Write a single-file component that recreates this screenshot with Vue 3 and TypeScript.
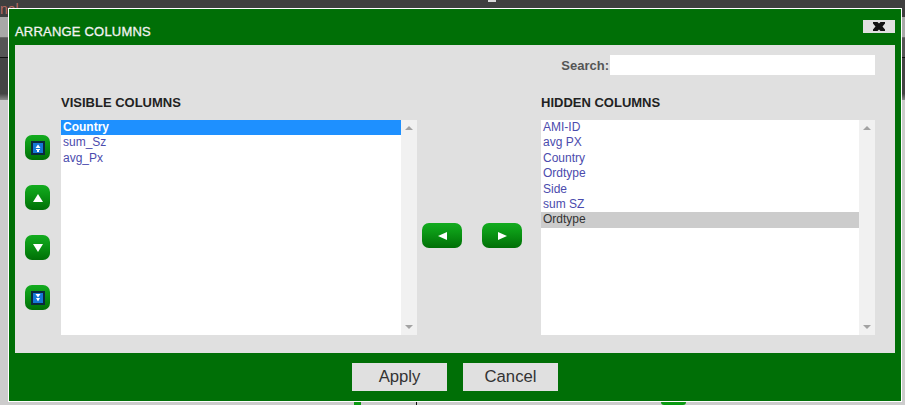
<script setup lang="ts">
const visibleCols: string[] = ['Country', 'sum_Sz', 'avg_Px']
const hiddenCols: string[] = ['AMI-ID', 'avg PX', 'Country', 'Ordtype', 'Side', 'sum SZ', 'Ordtype']
</script>

<template>
  <div class="page">
    <div class="bands">
      <div class="band top"><span class="clip">nal</span><i class="speck"></i></div>
      <div class="band light"></div>
      <div class="band mid"></div>
      <div class="band fade"></div>
      <div class="band rest"></div>
      <div class="bottom">
        <i class="tick"></i>
        <i class="gbit a"></i>
        <i class="gbit b"></i>
      </div>
    </div>

    <div class="dialog">
      <div class="titlebar">
        <span class="title">ARRANGE COLUMNS</span>
        <button class="close" type="button" aria-label="Close">
          <svg width="14" height="9" viewBox="0 0 14 9"><path d="M1 0H5.500L7 1.500 8.500 0H13V1.500L10.500 4.500 13 7.500V9H8.500L7 7.500 5.500 9H1V7.500L3.500 4.500 1 1.500Z" fill="#111" /></svg>
        </button>
      </div>

      <div class="panel">
        <div class="search">
          <label class="search-label" for="colsearch">Search:</label>
          <input id="colsearch" class="search-input" type="text" />
        </div>

        <div class="columns">
          <div class="movers">
            <button class="gbtn square" type="button" aria-label="Move to top">
              <svg width="14" height="14" viewBox="0 0 14 14"><rect x="1" y="1" width="12" height="12" fill="#1478d6" stroke="#0b2a3c" stroke-width="2" /><path d="M7 3.500 9.500 7H4.500Z M5 8H9V9H5Z M6 9H8V11H6Z" fill="#fff" /></svg>
            </button>
            <button class="gbtn square" type="button" aria-label="Move up">
              <svg width="10" height="8" viewBox="0 0 10 8"><path d="M5 0 10 8H0Z" fill="#fff" /></svg>
            </button>
            <button class="gbtn square" type="button" aria-label="Move down">
              <svg width="10" height="8" viewBox="0 0 10 8"><path d="M0 0H10L5 8Z" fill="#fff" /></svg>
            </button>
            <button class="gbtn square" type="button" aria-label="Move to bottom">
              <svg width="14" height="14" viewBox="0 0 14 14"><rect x="1" y="1" width="12" height="12" fill="#1478d6" stroke="#0b2a3c" stroke-width="2" /><path d="M4.500 3H9.500L7 6.500Z M5 7H9L7 10.500Z" fill="#fff" /></svg>
            </button>
          </div>

          <div class="col left">
            <h3 class="heading">VISIBLE COLUMNS</h3>
            <div class="listbox">
              <ul class="items">
                <li v-for="(c, i) in visibleCols" :key="i" :class="{ selected: i === 0 }">{{ c }}</li>
              </ul>
              <div class="scroll"><i class="up"></i><i class="down"></i></div>
            </div>
          </div>

          <div class="transfer">
            <button class="gbtn wide" type="button" aria-label="Hide column">
              <svg width="9" height="8" viewBox="0 0 9 8"><path d="M0 4 9 0V8Z" fill="#fff" /></svg>
            </button>
            <button class="gbtn wide" type="button" aria-label="Show column">
              <svg width="9" height="8" viewBox="0 0 9 8"><path d="M0 0 9 4 0 8Z" fill="#fff" /></svg>
            </button>
          </div>

          <div class="col right">
            <h3 class="heading">HIDDEN COLUMNS</h3>
            <div class="listbox">
              <ul class="items">
                <li v-for="(c, i) in hiddenCols" :key="i" :class="{ grayed: i === 6 }">{{ c }}</li>
              </ul>
              <div class="scroll"><i class="up"></i><i class="down"></i></div>
            </div>
          </div>
        </div>
      </div>

      <div class="footer">
        <button class="action" type="button">Apply</button>
        <button class="action" type="button">Cancel</button>
      </div>
    </div>
  </div>
</template>

<style>
html, body { margin: 0; overflow: hidden; }
</style>

<style scoped>
.page {
  position: relative;
  width: 905px;
  height: 405px;
  overflow: hidden;
  font-family: "Liberation Sans", Arial, sans-serif;
  background: #cccccc;
}
.bands { display: flex; flex-direction: column; height: 405px; }
.band { flex: none; position: relative; overflow: hidden; }
.top { height: 17px; background: #3f3f3f; border: 0; }
.clip {
  position: absolute; left: 0; top: 1px;
  font: 14px "Liberation Sans", sans-serif; color: #b86a62;
}
.speck { position: absolute; left: 488px; top: 0; width: 8px; height: 2px; background: #d8d8d8; }
.light { height: 20px; background: #a8a8a8; border-bottom: 1px solid #6a6a6a; }
.mid { height: 19px; background: #555555; border-bottom: 1px solid #111111; }
.fade { height: 42px; background: linear-gradient(#444444 0, #444444 85%, #8a8a8a 100%); }
.rest { flex: 1; background: #cccccc; }
.bottom { flex: none; height: 3px; position: relative; background: #cccccc; }
.tick { position: absolute; left: 416px; top: 0; width: 1px; height: 3px; background: #111; }
.gbit { position: absolute; top: 0; height: 3px; background: #0a9a12; }
.gbit.a { left: 354px; width: 7px; }
.gbit.b { left: 661px; width: 25px; border-radius: 0 0 10px 10px; }

.dialog {
  position: absolute;
  left: 8px;
  top: 8px;
  width: 892px;
  height: 392px;
  border: 1px solid #ffffff;
  background: #006f06;
  display: flex;
  flex-direction: column;
}
.titlebar {
  flex: none;
  height: 36px;
  padding: 0 6px;
  display: flex;
  align-items: flex-start;
  justify-content: space-between;
}
.title {
  margin-top: 14px;
  font-size: 13px;
  line-height: 17px;
  font-weight: 400;
  letter-spacing: 0.2px;
  color: #f2f2f2;
  -webkit-text-stroke: 0.3px #f2f2f2;
}
.close {
  margin: 11px 0 0;
  width: 32px;
  height: 13px;
  padding: 0;
  border: 0;
  background: #e0e0e0;
  display: flex;
  align-items: center;
  justify-content: center;
}
.panel {
  flex: none;
  height: 308px;
  margin: 0 6px;
  background: #e0e0e0;
  box-sizing: border-box;
  padding-top: 10px;
}
.search {
  height: 20px;
  display: flex;
  justify-content: flex-end;
  align-items: center;
  padding-right: 20px;
}
.search-label {
  font-size: 13px;
  font-weight: 700;
  color: #555555;
  margin-right: 1px;
}
.search-input {
  width: 265px;
  height: 20px;
  box-sizing: border-box;
  border: 0;
  padding: 0;
  background: #ffffff;
}
.columns {
  display: flex;
  margin-top: 20px;
  padding-left: 10px;
}
.movers {
  width: 25px;
  margin-right: 11px;
  padding-top: 40px;
  display: flex;
  flex-direction: column;
  gap: 25px;
}
.gbtn {
  flex: none;
  padding: 0;
  border: 0;
  border-radius: 7px;
  height: 25px;
  background: linear-gradient(#13ab1f 0%, #0c9a16 35%, #006f06 100%);
  display: flex;
  align-items: center;
  justify-content: center;
}
.square { width: 25px; }
.wide { width: 40px; }
.col { flex: none; }
.left { width: 356px; }
.right { width: 334px; }
.heading {
  margin: 0 0 10px;
  height: 15px;
  font-size: 13px;
  line-height: 15px;
  font-weight: 700;
  color: #222222;
}
.listbox {
  height: 215px;
  display: flex;
  background: #ffffff;
}
.items {
  flex: 1;
  margin: 0;
  padding: 0;
  list-style: none;
  font-size: 12px;
  color: #4b4bad;
}
.items li {
  height: 15.4px;
  line-height: 15.4px;
  padding-left: 2px;
}
.items li.selected {
  background: #1e90ff;
  color: #ffffff;
  font-weight: 700;
}
.items li.grayed {
  background: #cccccc;
  color: #333333;
}
.scroll {
  flex: none;
  width: 16px;
  background: #f1f1f1;
  display: flex;
  flex-direction: column;
  justify-content: space-between;
  align-items: center;
  padding: 6px 0;
  box-sizing: border-box;
}
.scroll i { width: 0; height: 0; border-left: 4px solid transparent; border-right: 4px solid transparent; }
.scroll .up { border-bottom: 4px solid #a3a3a3; }
.scroll .down { border-top: 4px solid #a3a3a3; }
.transfer {
  flex: none;
  width: 124px;
  box-sizing: border-box;
  padding: 128px 19px 0 5px;
  display: flex;
  justify-content: space-between;
  align-items: flex-start;
}
.footer {
  flex: 1;
  display: flex;
  justify-content: center;
  gap: 16px;
  padding: 10px 0 0 0;
}
.action {
  width: 95px;
  height: 28px;
  padding: 0;
  border: 0;
  background: #e0e0e0;
  font-family: "Liberation Sans", Arial, sans-serif;
  font-size: 16.7px;
  color: #333333;
}
</style>
